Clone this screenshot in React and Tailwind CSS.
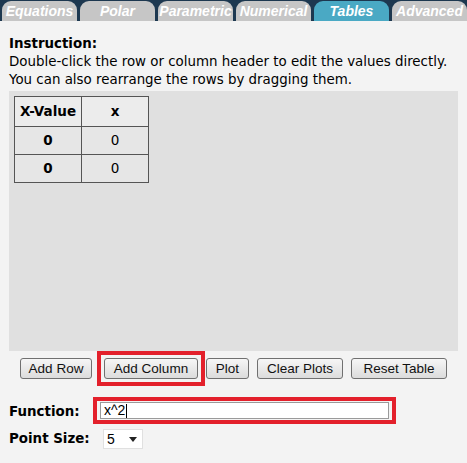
import React from 'react';

const TABS = ['Equations', 'Polar', 'Parametric', 'Numerical', 'Tables', 'Advanced'];

function Tab({ label, active }) {
  return (
    <div
      className={`h-[20px] w-[75px] rounded-t-[9px] text-center text-[14px] font-bold italic leading-[20px] text-white [font-family:'Liberation_Sans',Arial,sans-serif] ${
        active ? 'bg-[#4aa9c4]' : 'bg-[#c6c6c6]'
      }`}
    >
      {label}
    </div>
  );
}

function Btn({ children, w }) {
  return (
    <button
      type="button"
      className={`h-[21px] rounded-[3px] border border-[#707070] bg-gradient-to-b from-[#f6f6f6] to-[#dcdcdc] p-0 text-center text-[13.5px] leading-[19px] text-[#111] [font-family:'Liberation_Sans',Arial,sans-serif] ${w}`}
    >
      {children}
    </button>
  );
}

export default function App() {
  return (
    <div className="h-[463px] w-[467px] overflow-hidden bg-[#f3f3f3] text-[13.4px] text-black [font-family:'DejaVu_Sans',Verdana,sans-serif]">
      <div className="flex gap-[3px] bg-[#1d3850] pl-[2px] pt-[1px]">
        {TABS.map((t) => (
          <Tab key={t} label={t} active={t === 'Tables'} />
        ))}
      </div>

      <div className="px-[9px] pt-[14px]">
        <div className="font-bold leading-[18px]">Instruction:</div>
        <div className="leading-[18px]">Double-click the row or column header to edit the values directly.</div>
        <div className="leading-[18px]">You can also rearrange the rows by dragging them.</div>

        <div className="mt-[2px] h-[260px] w-[449px] bg-[#e0e0e0] p-[5px]">
          <table className="border-collapse border border-[#555] text-center text-[13.5px]">
            <tbody>
              <tr className="h-[30px] bg-[#ececec]">
                <td className="w-[67px] border border-[#555] font-bold">X-Value</td>
                <td className="w-[67px] border border-[#555] font-bold">x</td>
              </tr>
              {[0, 1].map((i) => (
                <tr key={i} className="h-[28px] bg-[#e6e6e6]">
                  <td className="border border-[#555] font-bold">0</td>
                  <td className="border border-[#555]">0</td>
                </tr>
              ))}
            </tbody>
          </table>
        </div>

        <div className="mt-[7px] flex items-center pl-[11px]">
          <Btn w="w-[72px]">Add Row</Btn>
          <div className="-my-[8px] ml-[5px] border-[4px] border-[#e3202b] px-[3px] py-[3px]">
            <Btn w="w-[94px]">Add Column</Btn>
          </div>
          <div className="ml-[1px]">
            <Btn w="w-[43px]">Plot</Btn>
          </div>
          <div className="ml-[8px]">
            <Btn w="w-[86px]">Clear Plots</Btn>
          </div>
          <div className="ml-[8px]">
            <Btn w="w-[96px]">Reset Table</Btn>
          </div>
        </div>

        <div className="mt-[18px] flex items-center">
          <div className="w-[84px] pt-[3px] font-bold">Function:</div>
          <div className="border-[4px] border-[#e3202b] px-[3px] py-[1px]">
            <div className="flex h-[17px] w-[289px] items-center border border-[#9a9a9a] bg-white px-[3px] text-[14px] [font-family:'Liberation_Sans',Arial,sans-serif]">
              x^2<span className="ml-[1px] h-[14px] w-px bg-black" />
            </div>
          </div>
        </div>

        <div className="mt-[5px] flex items-center">
          <div className="w-[94px] font-bold">Point Size:</div>
          <div className="flex h-[20px] w-[40px] items-center justify-between border border-[#e0e0e0] bg-white px-[3px] text-[14px] [font-family:'Liberation_Sans',Arial,sans-serif]">
            <span>5</span>
            <svg width="8" height="5" viewBox="0 0 8 5" className="mr-[2px]">
              <path d="M0 0h8L4 5z" fill="#222" />
            </svg>
          </div>
        </div>
      </div>
    </div>
  );
}
